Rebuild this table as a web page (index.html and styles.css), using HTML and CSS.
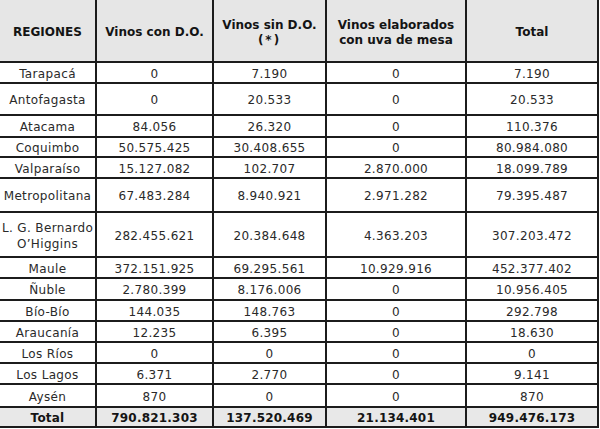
FILE: index.html
```html
<!DOCTYPE html>
<html lang="es">
<head>
<meta charset="utf-8">
<title>Producción de vinos por región</title>
<link rel="stylesheet" href="styles.css">
</head>
<body>
<table class="wine">
  <colgroup>
    <col class="c1"><col class="c2"><col class="c3"><col class="c4"><col class="c5">
  </colgroup>
  <thead>
    <tr class="h62">
      <th>REGIONES</th>
      <th>Vinos con D.O.</th>
      <th>Vinos sin D.O.<br><span class="ast">(*)</span></th>
      <th>Vinos elaborados<br>con uva de mesa</th>
      <th>Total</th>
    </tr>
  </thead>
  <tbody>
    <tr class="h21"><td>Tarapacá</td><td>0</td><td>7.190</td><td>0</td><td>7.190</td></tr>
    <tr class="h32"><td>Antofagasta</td><td>0</td><td>20.533</td><td>0</td><td>20.533</td></tr>
    <tr class="h22"><td>Atacama</td><td>84.056</td><td>26.320</td><td>0</td><td>110.376</td></tr>
    <tr class="h20"><td>Coquimbo</td><td>50.575.425</td><td>30.408.655</td><td>0</td><td>80.984.080</td></tr>
    <tr class="h21"><td>Valparaíso</td><td>15.127.082</td><td>102.707</td><td>2.870.000</td><td>18.099.789</td></tr>
    <tr class="h34"><td>Metropolitana</td><td>67.483.284</td><td>8.940.921</td><td>2.971.282</td><td>79.395.487</td></tr>
    <tr class="h45"><td>L. G. Bernardo<br>O’Higgins</td><td>282.455.621</td><td>20.384.648</td><td>4.363.203</td><td>307.203.472</td></tr>
    <tr class="h21"><td>Maule</td><td>372.151.925</td><td>69.295.561</td><td>10.929.916</td><td>452.377.402</td></tr>
    <tr class="h22"><td>Ñuble</td><td>2.780.399</td><td>8.176.006</td><td>0</td><td>10.956.405</td></tr>
    <tr class="h21"><td>Bío-Bío</td><td>144.035</td><td>148.763</td><td>0</td><td>292.798</td></tr>
    <tr class="h21"><td>Araucanía</td><td>12.235</td><td>6.395</td><td>0</td><td>18.630</td></tr>
    <tr class="h21"><td>Los Ríos</td><td>0</td><td>0</td><td>0</td><td>0</td></tr>
    <tr class="h21"><td>Los Lagos</td><td>6.371</td><td>2.770</td><td>0</td><td>9.141</td></tr>
    <tr class="h23"><td>Aysén</td><td>870</td><td>0</td><td>0</td><td>870</td></tr>
  </tbody>
  <tfoot>
    <tr class="h20 total"><td>Total</td><td>790.821.303</td><td>137.520.469</td><td>21.134.401</td><td>949.476.173</td></tr>
  </tfoot>
</table>
</body>
</html>
```
FILE: styles.css
```css
html, body {
  margin: 0;
  padding: 0;
  background: #ffffff;
}

.wine {
  border-collapse: collapse;
  table-layout: fixed;
  width: 598px;
  font-family: "DejaVu Sans", Verdana, sans-serif;
  font-size: 12px;
  color: #2a2a2a;
}

.c1 { width: 96px; }
.c2 { width: 117px; }
.c3 { width: 113px; }
.c4 { width: 140px; }
.c5 { width: 132px; }

.wine th,
.wine td {
  border: 2px solid #1c1c1c;
  padding: 2px 2px 0;
  text-align: center;
  vertical-align: middle;
  line-height: 16px;
  letter-spacing: 0.35px;
  white-space: nowrap;
}

.wine tr > :first-child { border-left: none; }
.wine thead tr > * { border-top: none; }

.wine th {
  background: #e6e6e6;
  font-weight: bold;
  color: #141414;
  letter-spacing: 0;
  line-height: 15px;
  padding-top: 4px;
}

.ast { letter-spacing: 2px; }

.wine .total td {
  background: #e8e8e8;
  font-weight: bold;
  color: #141414;
  letter-spacing: 0.2px;
  padding-top: 1px;
}

.h62 { height: 62px; }
.h45 { height: 45px; }
.h34 { height: 34px; }
.h32 { height: 32px; }
.h23 { height: 23px; }
.h22 { height: 22px; }
.h21 { height: 21px; }
.h20 { height: 20px; }
```
